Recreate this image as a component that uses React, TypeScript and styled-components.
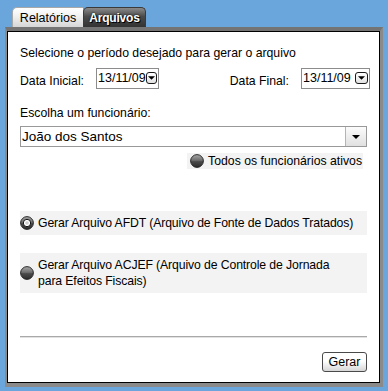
import React from "react";
import styled, { createGlobalStyle } from "styled-components";

const Global = createGlobalStyle`
  html, body { margin: 0; padding: 0; background: #6aa6dc; }
  body { font-family: "Liberation Sans", Arial, sans-serif; font-size: 12.25px; color: #000; }
`;

const Page = styled.div`
  width: 388px;
  height: 391px;
  padding: 7px 5px 4px 5px;
  box-sizing: border-box;
  display: flex;
  flex-direction: column;
`;

const TabBar = styled.div`
  display: flex;
  padding-left: 7px;
  height: 20px;
`;

const Tab = styled.div<{ $active?: boolean; $w: number }>`
  width: ${(p) => p.$w}px;
  height: 20px;
  box-sizing: border-box;
  display: flex;
  align-items: center;
  justify-content: center;
  border-radius: 5px 5px 0 0;
  ${(p) =>
    p.$active
      ? `background: linear-gradient(#8a8a8a, #4a4a4a 45%, #333);
         color: #fff; font-weight: bold; font-size: 12px; letter-spacing: -0.2px;
         text-shadow: 1px 1px 0 #000, 0 0 2px #000;
         border: 1px solid #3a3a3a; border-bottom: none;`
      : `background: linear-gradient(#ffffff, #f2f2f2 40%, #d6d6d6);
         color: #000; border-radius: 5px 0 0 0; font-size: 12.5px;
         border: 1px solid #a8a8a8; border-bottom: none; border-right: none;
         padding-top: 1px;`}
`;

const Panel = styled.div`
  flex: 1;
  border-style: solid;
  border-color: #747474 #8a8a8a #8a8a8a #8a8a8a;
  border-width: 4px 3px 4px 2px;
  display: flex;
`;

const Inner = styled.div`
  flex: 1;
  border: 1px solid #000;
  background: #fff;
  padding: 13px 12px 10px 12px;
  display: flex;
  flex-direction: column;
`;

const Text = styled.div`
  line-height: 16px;
  white-space: nowrap;
`;

const DateRow = styled.div`
  display: flex;
  align-items: center;
  justify-content: space-between;
  margin-top: 6px;
  margin-right: -3px;
`;

const DateGroup = styled.div`
  display: flex;
  align-items: center;
  gap: 12px;
`;

const Label = styled.span`
  padding-top: 6px;
  line-height: 16px;
`;

const DateBox = styled.div<{ $w: number }>`
  width: ${(p) => p.$w}px;
  height: 21px;
  box-sizing: border-box;
  border: 1px solid #8c8c8c;
  display: flex;
  align-items: center;
  justify-content: space-between;
  padding: 0 1px 1px 1px;
  font-size: 12.5px;
`;

const MiniBtn = styled.div`
  width: 13px;
  height: 12px;
  box-sizing: border-box;
  border: 1px solid #1a1a1a;
  border-radius: 3px;
  background: linear-gradient(#fff, #e2e2e2);
  display: flex;
  align-items: center;
  justify-content: center;
`;

const SectionLabel = styled(Text)`
  margin-top: 16px;
`;

const Select = styled.div`
  margin-top: 5px;
  height: 21px;
  box-sizing: border-box;
  border: 1px solid #999;
  display: flex;
  align-items: stretch;
`;

const SelectValue = styled.div`
  flex: 1;
  display: flex;
  align-items: center;
  padding-left: 1px;
  font-size: 13.5px;
`;

const SelectBtn = styled.div`
  width: 20px;
  border-left: 1px solid #b4b4b4;
  background: linear-gradient(#fcfcfc, #e0e0e0);
  display: flex;
  align-items: center;
  justify-content: center;
`;

const RightRow = styled.div`
  display: flex;
  justify-content: flex-end;
  margin-top: 6px;
  padding-right: 4px;
`;

const SmallOption = styled.div`
  background: #f3f3f3;
  display: flex;
  align-items: center;
  gap: 4px;
  height: 16px;
  padding: 0 1px 0 3px;
  line-height: 16px;
  white-space: nowrap;
`;

const BigOption = styled.div<{ $gap: number; $h: number }>`
  background: #f3f3f3;
  margin-top: ${(p) => p.$gap}px;
  height: ${(p) => p.$h}px;
  display: flex;
  align-items: center;
  gap: 4px;
  line-height: 16px;
  white-space: nowrap;
  letter-spacing: -0.12px;
`;

const Spacer = styled.div`
  flex: 1;
`;

const Rule = styled.div`
  height: 1px;
  background: #a9a9a9;
  border-bottom: 1px solid #e2e2e2;
`;

const Footer = styled.div`
  display: flex;
  justify-content: flex-end;
  margin-top: 14px;
`;

const Button = styled.button`
  font-family: inherit;
  font-size: 12.5px;
  width: 45px;
  height: 20px;
  padding: 0;
  border: 1px solid #4a4a4a;
  border-radius: 3px;
  background: linear-gradient(#ffffff 45%, #d6d6d6);
  color: #000;
`;

const Radio = ({ checked }: { checked?: boolean }) => {
  const id = checked ? "rgc" : "rgu";
  return (
    <svg width="14" height="14" viewBox="0 0 14 14" style={{ flexShrink: 0 }}>
      <defs>
        <linearGradient id={id} x1="0" y1="0" x2="0" y2="1">
          <stop offset="0" stopColor="#a8a8a8" />
          <stop offset="0.45" stopColor="#6e6e6e" />
          <stop offset="0.55" stopColor="#4a4a4a" />
          <stop offset="1" stopColor="#2c2c2c" />
        </linearGradient>
      </defs>
      <circle cx="7" cy="7" r="6.4" fill={`url(#${id})`} stroke="#1e1e1e" strokeWidth="0.9" />
      {checked && (
        <>
          <circle cx="7" cy="7" r="3.7" fill="#fff" stroke="#111" strokeWidth="1" />
          <circle cx="7" cy="7" r="1.8" fill="#cfcfcf" />
        </>
      )}
    </svg>
  );
};

const Caret = ({ w = 8 }: { w?: number }) => (
  <svg width={w} height={Math.ceil(w / 2)} viewBox="0 0 8 4">
    <path d="M0 0 H8 L4 4 Z" fill="#000" />
  </svg>
);

export default function App() {
  return (
    <Page>
      <Global />
      <TabBar>
        <Tab $w={71}>Relatórios</Tab>
        <Tab $w={63} $active>
          Arquivos
        </Tab>
      </TabBar>
      <Panel>
        <Inner>
          <Text>Selecione o período desejado para gerar o arquivo</Text>
          <DateRow>
            <DateGroup>
              <Label>Data Inicial:</Label>
              <DateBox $w={63}>
                13/11/09
                <MiniBtn>
                  <Caret w={7} />
                </MiniBtn>
              </DateBox>
            </DateGroup>
            <DateGroup>
              <Label>Data Final:</Label>
              <DateBox $w={69}>
                13/11/09
                <MiniBtn>
                  <Caret w={7} />
                </MiniBtn>
              </DateBox>
            </DateGroup>
          </DateRow>
          <SectionLabel>Escolha um funcionário:</SectionLabel>
          <Select>
            <SelectValue>João dos Santos</SelectValue>
            <SelectBtn>
              <Caret />
            </SelectBtn>
          </Select>
          <RightRow>
            <SmallOption>
              <Radio />
              Todos os funcionários ativos
            </SmallOption>
          </RightRow>
          <BigOption $gap={42} $h={24}>
            <Radio checked />
            Gerar Arquivo AFDT (Arquivo de Fonte de Dados Tratados)
          </BigOption>
          <BigOption $gap={18} $h={40}>
            <Radio />
            <span>
              Gerar Arquivo ACJEF (Arquivo de Controle de Jornada
              <br />
              para Efeitos Fiscais)
            </span>
          </BigOption>
          <Spacer />
          <Rule />
          <Footer>
            <Button>Gerar</Button>
          </Footer>
        </Inner>
      </Panel>
    </Page>
  );
}
